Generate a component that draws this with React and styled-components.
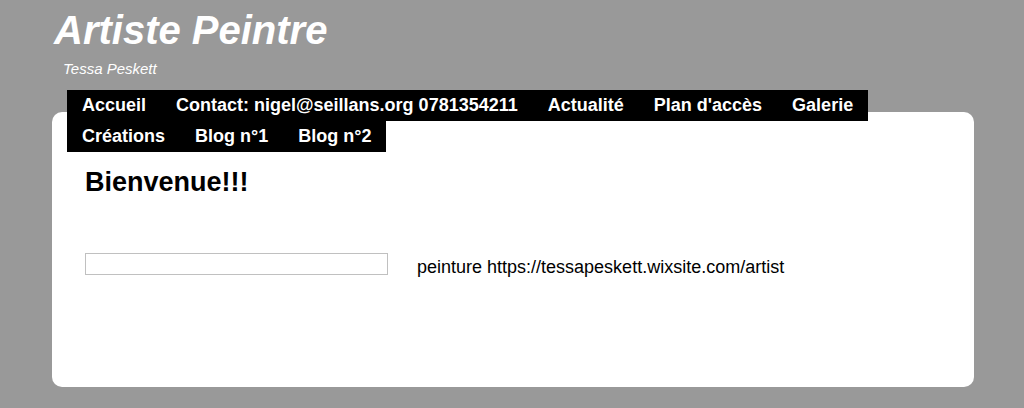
import React from 'react'
import styled, { createGlobalStyle } from 'styled-components'

const GlobalStyle = createGlobalStyle`
  html, body {
    margin: 0;
    padding: 0;
    background: #999999;
    font-family: "Liberation Sans", Arial, sans-serif;
  }
`

const Header = styled.header`
  padding: 7px 0 0 54px;
  color: #fff;
`

const SiteTitle = styled.h1`
  margin: 0;
  font-size: 40px;
  font-style: italic;
  font-weight: bold;
  line-height: 46px;
`

const SiteSubtitle = styled.p`
  margin: 7px 0 0 9px;
  font-size: 15px;
  font-style: italic;
  line-height: 18px;
`

const Main = styled.div`
  margin: 12px 50px 0 52px;
`

const Nav = styled.nav`
  position: relative;
  z-index: 1;
  display: flex;
  flex-wrap: wrap;
  width: 860px;
  margin-left: 15px;
`

const NavItem = styled.a`
  display: block;
  padding: 0 15px;
  background: #000;
  color: #fff;
  font-size: 18px;
  font-weight: bold;
  line-height: 31px;
  text-decoration: none;
  white-space: nowrap;
`

const Panel = styled.section`
  margin-top: -40px;
  height: 275px;
  box-sizing: border-box;
  padding: 54px 33px 0;
  background: #fff;
  border-radius: 10px;
`

const Heading = styled.h2`
  margin: 0;
  font-size: 27px;
  font-weight: bold;
  line-height: 32px;
  color: #000;
`

const Row = styled.div`
  display: flex;
  align-items: flex-start;
  gap: 29px;
  margin-top: 55px;
`

const Field = styled.div`
  width: 303px;
  height: 22px;
  box-sizing: border-box;
  border: 1px solid #c0c0c0;
`

const Text = styled.p`
  margin: 3px 0 0;
  font-size: 18px;
  line-height: 22px;
  color: #000;
`

const links = [
  'Accueil',
  'Contact: nigel@seillans.org 0781354211',
  'Actualité',
  "Plan d'accès",
  'Galerie',
  'Créations',
  'Blog n°1',
  'Blog n°2',
]

export default function App() {
  return (
    <>
      <GlobalStyle />
      <Header>
        <SiteTitle>Artiste Peintre</SiteTitle>
        <SiteSubtitle>Tessa Peskett</SiteSubtitle>
      </Header>
      <Main>
        <Nav>
          {links.map(l => (
            <NavItem key={l} href="#">{l}</NavItem>
          ))}
        </Nav>
        <Panel>
          <Heading>Bienvenue!!!</Heading>
          <Row>
            <Field />
            <Text>peinture https://tessapeskett.wixsite.com/artist</Text>
          </Row>
        </Panel>
      </Main>
    </>
  )
}
